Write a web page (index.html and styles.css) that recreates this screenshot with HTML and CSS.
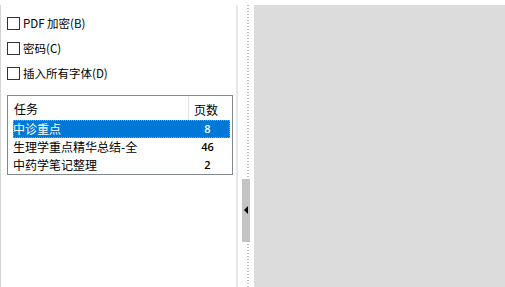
FILE: index.html
```html
<!DOCTYPE html>
<html>
<head>
<meta charset="utf-8">
<link rel="stylesheet" href="styles.css">
</head>
<body>
<div class="app">
  <div class="left">
    <div class="opts">
      <label class="opt"><span class="box"></span><span class="lbl">PDF 加密(B)</span></label>
      <label class="opt"><span class="box"></span><span class="lbl">密码(C)</span></label>
      <label class="opt"><span class="box"></span><span class="lbl">插入所有字体(D)</span></label>
    </div>
    <div class="list">
      <div class="hdr">
        <div class="c1">任务</div>
        <div class="c2">页数</div>
      </div>
      <div class="row sel"><div class="c1">中诊重点</div><div class="c2">8</div></div>
      <div class="row"><div class="c1">生理学重点精华总结-全</div><div class="c2">46</div></div>
      <div class="row"><div class="c1">中药学笔记整理</div><div class="c2">2</div></div>
    </div>
  </div>
  <div class="sep"></div>
  <div class="splitter">
    <div class="dots top"></div>
    <div class="handle"><span class="tri"></span></div>
    <div class="dots bottom"></div>
  </div>
  <div class="canvas"></div>
</div>
</body>
</html>
```
FILE: styles.css
```css
html, body { margin: 0; padding: 0; background: #fff; }
body { width: 505px; height: 287px; overflow: hidden; font-family: "Noto Sans CJK SC", "Noto Sans", sans-serif; font-size: 12px; color: #000; }
.app { display: flex; height: 282px; margin-top: 5px; }
.left { width: 236px; border-left: 1px solid #d4d4d4; box-sizing: border-box; padding: 12px 0 0 6px; }
.opts { display: flex; flex-direction: column; gap: 12px; }
.opt { display: flex; align-items: center; height: 13px; }
.box { width: 11px; height: 11px; border: 1px solid #333; background: #fff; margin-right: 3px; }
.lbl { font-size: 11.5px; line-height: 13px; }
.list { margin-top: 15px; width: 226px; height: 80px; border: 1px solid #828790; box-sizing: border-box; padding: 0 2px 0 5px; }
.hdr { display: flex; height: 24px; align-items: center; }
.hdr .c1 { flex: 1; padding-left: 1px; line-height: 24px; padding-top: 2px; }
.hdr .c2 { width: 42px; border-left: 1px solid #e5e5e5; height: 24px; line-height: 24px; box-sizing: border-box; padding-left: 5px; padding-top: 2px; }
.row { display: flex; height: 18px; line-height: 18px; }
.row .c1 { flex: 1; }
.row .c2 { width: 42px; text-align: center; font-size: 11px; font-family: "Open Sans", sans-serif; font-weight: 600; padding-right: 3px; box-sizing: border-box; }
.row.sel { background: #0078d7; color: #fff; outline: 1px dotted #e08a3c; outline-offset: -1px; }
.sep { width: 2px; background: #e8e8e8; }
.splitter { width: 16px; display: flex; flex-direction: column; align-items: center; }
.dots { width: 2px; margin-left: 4px; background: repeating-linear-gradient(to bottom, #bdbdbd 0 1px, transparent 1px 3px); }
.dots.top { height: 174px; }
.dots.bottom { flex: 1; margin-top: 2px; }
.handle { width: 8px; height: 63px; background: #c4c4c4; display: flex; align-items: center; justify-content: center; }
.tri { width: 0; height: 0; border-top: 4px solid transparent; border-bottom: 4px solid transparent; border-right: 4px solid #000; margin-right: 1px; margin-top: -2px; }
.canvas { flex: 1; background: #dcdcdc; }
```
